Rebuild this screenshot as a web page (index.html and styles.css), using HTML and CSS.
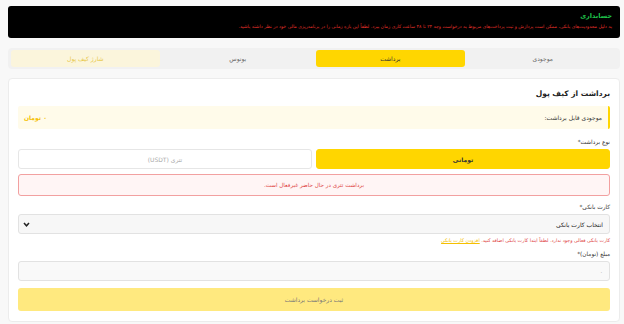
FILE: index.html
```html
<!DOCTYPE html>
<html lang="fa" dir="rtl">
<head>
    <meta charset="UTF-8">
    <meta name="viewport" content="width=device-width, initial-scale=1.0">
    <title>کیف پول</title>
    <link rel="stylesheet" href="styles.css">
</head>
<body>

    <div class="notice">
        <div class="notice-title">حسابداری</div>
        <p>به دلیل محدودیت‌های بانکی، ممکن است پردازش و ثبت پرداخت‌های مربوط به درخواست وجه ۲۴ تا ۴۸ ساعت کاری زمان ببرد. لطفاً این بازه زمانی را در برنامه‌ریزی مالی خود در نظر داشته باشید.</p>
    </div>

    <div class="tabs">
        <div class="tab">موجودی</div>
        <div class="tab active">برداشت</div>
        <div class="tab">بونوس</div>
        <div class="tab charge">شارژ کیف پول</div>
    </div>

    <div class="card">
        <h2>برداشت از کیف پول</h2>

        <div class="balance">
            <span>موجودی قابل برداشت:</span>
            <strong>۰ تومان</strong>
        </div>

        <label class="field-label">نوع برداشت*</label>
        <div class="type-row">
            <button class="type-btn selected">تومانی</button>
            <button class="type-btn">تتری (USDT)</button>
        </div>

        <div class="error-box">برداشت تتری در حال حاضر غیرفعال است.</div>

        <label class="field-label">کارت بانکی*</label>
        <div class="select">
            <span>انتخاب کارت بانکی</span>
            <svg width="7" height="5" viewBox="0 0 7 5"><path d="M1 1 L3.5 3.8 L6 1" fill="none" stroke="#222" stroke-width="1.5"/></svg>
        </div>
        <div class="hint">کارت بانکی فعالی وجود ندارد. لطفاً ابتدا کارت بانکی اضافه کنید. <a href="#">افزودن کارت بانکی</a></div>

        <label class="field-label">مبلغ (تومان)*</label>
        <div class="input">۰</div>

        <button class="submit">ثبت درخواست برداشت</button>
    </div>

</body>
</html>
```

FILE: styles.css
```css
* {
    box-sizing: border-box;
}
body {
    font-family: "DejaVu Sans", sans-serif;
    margin: 0;
    padding: 6px 4px 0 8px;
    background: #f8f8f8;
    color: #333;
    font-size: 6px;
}
.notice {
    background: #000;
    border-radius: 3px;
    padding: 6px 8px 5px;
    height: 32px;
}
.notice-title {
    color: #1fc24a;
    font-weight: bold;
    font-size: 6.5px;
    margin-bottom: 4px;
}
.notice p {
    margin: 0;
    color: #e0302a;
    font-size: 4.6px;
}
.tabs {
    display: grid;
    grid-template-columns: repeat(4, 1fr);
    gap: 4px;
    background: #f1f1f1;
    border-radius: 4px;
    padding: 2px 3px;
    margin-top: 10px;
    height: 21px;
}
.tab {
    display: flex;
    align-items: center;
    justify-content: center;
    border-radius: 3px;
    color: #666;
    font-size: 6px;
}
.tab.active {
    background: #ffd600;
    color: #333;
}
.tab.charge {
    background: #fbf5dc;
    color: #e8c84a;
}
.card {
    background: #fff;
    border: 1px solid #ececec;
    border-radius: 4px;
    margin-top: 9px;
    padding: 10px 9px 10px;
    height: 244px;
}
h2 {
    font-size: 7.5px;
    margin: 0 0 8px;
    color: #222;
}
.balance {
    display: flex;
    justify-content: space-between;
    align-items: center;
    background: #fffbea;
    border-right: 2px solid #ffd600;
    border-radius: 2px;
    height: 23px;
    padding: 0 6px;
    margin-bottom: 10px;
    font-size: 6px;
}
.balance strong {
    color: #f5c000;
}
.field-label {
    display: block;
    margin: 8px 0 4px;
    font-size: 5.8px;
    color: #333;
}
.type-row {
    display: grid;
    grid-template-columns: 1fr 1fr;
    gap: 4px;
}
.type-btn {
    font-family: inherit;
    font-size: 6px;
    height: 20px;
    border: 1px solid #e6e6e6;
    border-radius: 3px;
    background: #fff;
    color: #aaa;
}
.type-btn.selected {
    background: #ffd600;
    border-color: #ffd600;
    color: #333;
    font-weight: bold;
}
.error-box {
    margin-top: 5px;
    height: 22px;
    display: flex;
    align-items: center;
    justify-content: center;
    background: #fff5f5;
    border: 1px solid #f2a0a0;
    border-radius: 3px;
    color: #e04646;
    font-size: 5.6px;
}
.select {
    display: flex;
    justify-content: space-between;
    align-items: center;
    height: 20px;
    background: #f7f7f7;
    border: 1px solid #e2e2e2;
    border-radius: 3px;
    padding: 0 6px 0 4px;
    font-size: 6px;
    color: #222;
}
.hint {
    margin-top: 4px;
    color: #e04646;
    font-size: 4.8px;
}
.hint a {
    color: #f5c000;
    text-decoration: underline;
}
.input {
    height: 20px;
    background: #f9f9f9;
    border: 1px solid #e2e2e2;
    border-radius: 3px;
    padding: 0 6px;
    display: flex;
    align-items: center;
    color: #aaa;
    font-size: 6px;
}
.submit {
    display: block;
    width: 100%;
    margin-top: 7px;
    height: 23px;
    border: none;
    border-radius: 3px;
    background: #ffe97f;
    color: #777;
    font-family: inherit;
    font-size: 6px;
}
```
